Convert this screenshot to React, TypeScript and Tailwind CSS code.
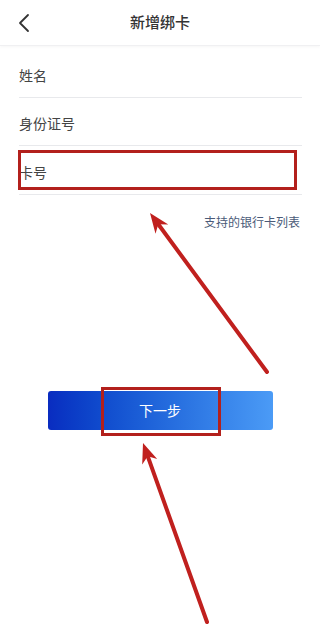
import React from "react";

const fields = ["姓名", "身份证号"];

export default function App() {
  return (
    <div className="relative w-[320px] h-[644px] overflow-hidden bg-white font-['Noto_Sans_CJK_SC','Noto_Sans',sans-serif]">
      {/* Header */}
      <div className="relative flex h-[46px] items-center justify-center border-b border-[#f0f0f2] shadow-[0_1px_3px_rgba(0,0,0,0.04)]">
        <svg className="absolute left-[17px] top-[13px]" width="14" height="20" viewBox="0 0 14 20" fill="none">
          <polyline points="11,2 3,10 11,18" stroke="#333" strokeWidth="1.8" strokeLinecap="round" strokeLinejoin="round" />
        </svg>
        <span className="text-[15px] font-medium text-[#333]">新增绑卡</span>
      </div>

      {/* Form */}
      <div className="mt-[4px] pl-[19px] pr-[18px]">
        {fields.map((f) => (
          <div key={f} className="flex h-[48px] items-center border-b border-[#e8e9ec] pt-[4px]">
            <span className="text-[14px] text-[#444]">{f}</span>
          </div>
        ))}
        <div className="relative flex h-[49px] items-center border-b border-[#e8e9ec] pt-[4px]">
          <span className="text-[14px] text-[#444]">卡号</span>
          <div className="absolute left-[-1px] top-[4px] h-[40px] w-[279px] border-[3px] border-[#b3201c]" />
        </div>
        <div className="mt-[19px] pr-[2px] text-right text-[12px] leading-[16px] text-[#4a5a78]">
          支持的银行卡列表
        </div>
      </div>

      {/* Button */}
      <div className="relative mx-auto mt-[161px] w-[225px]">
        <button className="flex h-[39px] w-full items-center justify-center rounded-[3px] bg-gradient-to-r from-[#0a2cc0] to-[#4b9bf6] text-[14px] text-white">
          下一步
        </button>
        <div className="absolute left-[53px] top-[-4px] h-[49px] w-[120px] border-[3px] border-[#b3201c]" />
      </div>

      {/* Annotation arrows */}
      <svg className="pointer-events-none absolute inset-0" width="320" height="644" viewBox="0 0 320 644">
        <line x1="267" y1="372" x2="158.3" y2="224.3" stroke="#c0201e" strokeWidth="4" strokeLinecap="round" />
        <polygon points="150,213 168.3,224.4 158.3,224.3 155.5,233.8" fill="#c0201e" />
        <line x1="207" y1="622" x2="147.7" y2="456.2" stroke="#c0201e" strokeWidth="4" strokeLinecap="round" />
        <polygon points="143,443 157.2,459.1 147.7,456.2 142.2,464.5" fill="#c0201e" />
      </svg>
    </div>
  );
}
